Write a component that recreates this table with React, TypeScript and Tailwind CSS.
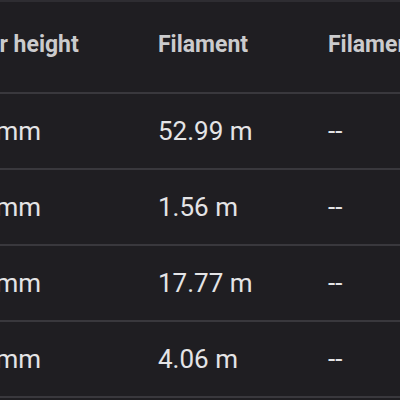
const rows = [
  { layer: '0.2 mm', filament: '52.99 m', extra: '--' },
  { layer: '0.2 mm', filament: '1.56 m', extra: '--' },
  { layer: '0.2 mm', filament: '17.77 m', extra: '--' },
  { layer: '0.2 mm', filament: '4.06 m', extra: '--' },
];

export default function App() {
  return (
    <div className="w-[400px] h-[400px] overflow-hidden bg-[#1f1e22] border-t-2 border-[#2e2d32] font-['Roboto',sans-serif]">
      <div className="ml-[-47px] w-[620px]">
        {/* Header */}
        <div className="flex h-[92px] items-center border-b-2 border-[#39383d] pb-1 text-[23px] font-bold text-[#cbcbcd]">
          <div className="w-[205px] shrink-0 whitespace-nowrap -ml-0.5 pr-[-2px]">Layer height</div>
          <div className="w-[170px] shrink-0 whitespace-nowrap ml-0.5">Filament</div>
          <div className="w-[170px] shrink-0 whitespace-nowrap">Filament cost</div>
        </div>

        {/* Rows */}
        {rows.map((r, i) => (
          <div
            key={i}
            className="flex h-[76px] items-center border-b-2 border-[#39383d] text-[26px] text-[#e4e4e6]"
          >
            <div className="w-[205px] shrink-0 whitespace-nowrap">{r.layer}</div>
            <div className="w-[170px] shrink-0 whitespace-nowrap">{r.filament}</div>
            <div className="w-[170px] shrink-0 whitespace-nowrap">{r.extra}</div>
          </div>
        ))}
      </div>
    </div>
  );
}
